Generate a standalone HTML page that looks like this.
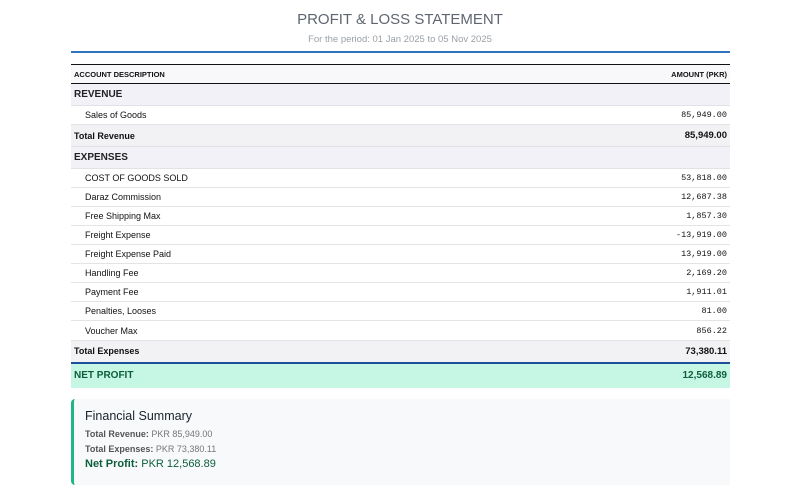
<!DOCTYPE html>
<html><head><style>
*{margin:0;padding:0;box-sizing:border-box}
body{width:800px;height:500px;background:#fff;font-family:"Liberation Sans",sans-serif;color:#111;position:relative;overflow:hidden}
.t{position:absolute;left:0;width:800px;text-align:center}
.sub{top:34px;font-size:9.5px;color:#9aa0a6}
.bl{position:absolute;left:71px;width:659px;top:51px;height:2px;background:#2f74c0}
table{position:absolute;left:71px;top:64px;width:659px;border-collapse:collapse}
td{font-size:9px;padding:0 3px;vertical-align:middle}
td.r{text-align:right;font-family:"Liberation Mono",monospace;font-size:8.5px}
tr.h td{height:19px;font-weight:bold;font-size:7.5px;border-top:1.5px solid #111;border-bottom:1.5px solid #111;background:#f8f8fa}
tr.s td{height:22px;font-weight:bold;font-size:10px;background:#f2f1f8;border-bottom:1px solid #e2e2e6;color:#222}
tr.i td{height:19px;border-bottom:1px solid #e4e4e8}
tr.i.f td{height:20px}
tr.i td:first-child{padding-left:14px}
tr.tt td{height:22px;font-weight:bold;background:#f2f2f4;border-bottom:1px solid #e2e2e6}
tr.tt td.r{font-family:"Liberation Sans",sans-serif;font-size:9.5px}
tr.np td{height:25px;font-weight:bold;background:#c6f7e5;color:#0d5e3c;border-top:2px solid #1e4f9a;font-size:10px}
tr.np td.r{font-family:"Liberation Sans",sans-serif}
.box{position:absolute;left:71px;top:399px;width:659px;height:86px;background:#f8f9fa;border-left:3px solid #1fb585;border-radius:4px 0 0 4px;padding:10px 11px}
.box h2{font-size:12.5px;font-weight:normal;color:#1b2330;margin-bottom:4px}
.box p{font-size:9px;color:#777;line-height:15px}
.box b{color:#555}
.box p.n{font-size:11px;color:#0d5e3c;font-weight:bold}
</style></head><body>
<div class="t" style="top:11px;font-size:15px;color:#5f6670">PROFIT &amp; LOSS STATEMENT</div>
<div class="t sub">For the period: 01 Jan 2025 to 05 Nov 2025</div>
<div class="bl"></div>
<table>
<tr class="h"><td>ACCOUNT DESCRIPTION</td><td style="text-align:right">AMOUNT (PKR)</td></tr>
<tr class="s"><td>REVENUE</td><td></td></tr>
<tr class="i"><td>Sales of Goods</td><td class="r">85,949.00</td></tr>
<tr class="tt"><td>Total Revenue</td><td class="r">85,949.00</td></tr>
<tr class="s"><td>EXPENSES</td><td></td></tr>
<tr class="i"><td>COST OF GOODS SOLD</td><td class="r">53,818.00</td></tr>
<tr class="i"><td>Daraz Commission</td><td class="r">12,687.38</td></tr>
<tr class="i"><td>Free Shipping Max</td><td class="r">1,857.30</td></tr>
<tr class="i"><td>Freight Expense</td><td class="r">-13,919.00</td></tr>
<tr class="i"><td>Freight Expense Paid</td><td class="r">13,919.00</td></tr>
<tr class="i"><td>Handling Fee</td><td class="r">2,169.20</td></tr>
<tr class="i"><td>Payment Fee</td><td class="r">1,911.01</td></tr>
<tr class="i"><td>Penalties, Looses</td><td class="r">81.00</td></tr>
<tr class="i f"><td>Voucher Max</td><td class="r">856.22</td></tr>
<tr class="tt"><td>Total Expenses</td><td class="r">73,380.11</td></tr>
<tr class="np"><td>NET PROFIT</td><td class="r">12,568.89</td></tr>
</table>
<div class="box">
<h2>Financial Summary</h2>
<p><b>Total Revenue:</b> PKR 85,949.00</p>
<p><b>Total Expenses:</b> PKR 73,380.11</p>
<p class="n">Net Profit: <span style="font-weight:normal">PKR 12,568.89</span></p>
</div>
</body></html>
